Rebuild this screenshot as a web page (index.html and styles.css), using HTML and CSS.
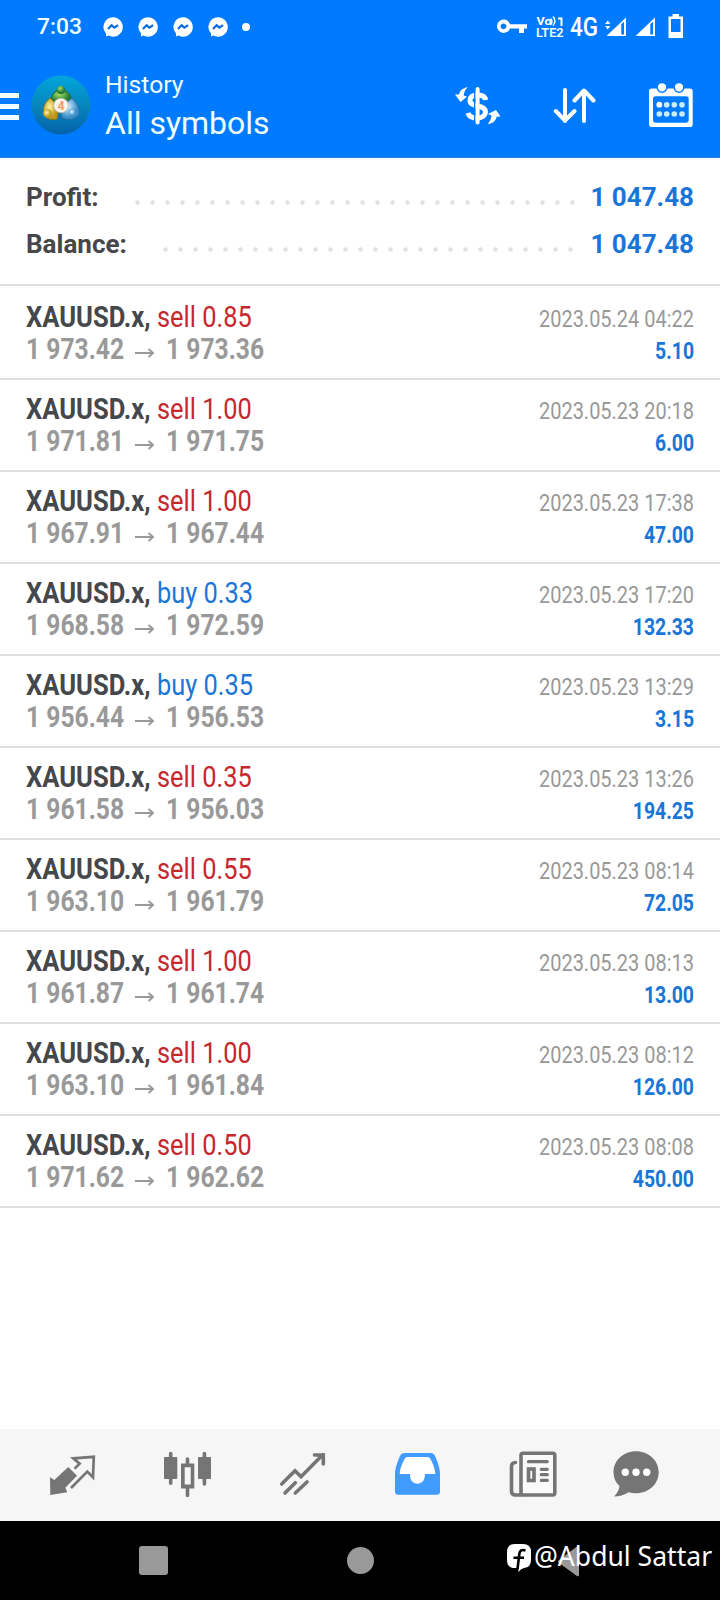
FILE: index.html
```html
<!DOCTYPE html>
<html lang="en">
<head>
<meta charset="utf-8">
<title>History</title>
<link rel="stylesheet" href="styles.css">
</head>
<body>
<svg class="defs" width="0" height="0">
  <symbol id="msgr" viewBox="0 0 20 20"><path fill="#fff" d="M10 .3a9.7 9.7 0 1 1-4.6 18.2L3 19.6V16.500A9.700 9.700 0 0 1 10 .3z"/><path d="M5 12l3.600-3.700 2.800 2.400 3.700-2.600" fill="none" stroke="#0a6ae0" stroke-width="2.200"/></symbol>
</svg>
<header class="top">
  <div class="status">
    <span class="time">7:03</span>
    <div class="notes">
      <svg width="20" height="20"><use href="#msgr"/></svg>
      <svg width="20" height="20"><use href="#msgr"/></svg>
      <svg width="20" height="20"><use href="#msgr"/></svg>
      <svg width="20" height="20"><use href="#msgr"/></svg>
      <i class="dot"></i>
    </div>
    <svg class="sys" width="190" height="30" viewBox="495 12 190 30" fill="#fff">
      <path fill-rule="evenodd" d="M503.500 19.500a6.700 6.700 0 0 1 6.500 4.700h17v4.400h-3v4.400h-5v-4.400h-9a6.700 6.700 0 1 1-6.500-9.100zm0 4a2.900 2.900 0 1 0 .01 0z"/>
      <text x="536.500" y="25" font-size="10.500" font-weight="700" textLength="15" lengthAdjust="spacingAndGlyphs">Vo</text>
      <path d="M550.500 18.500q3 3 0 6.500M553 16.500q4 4.500 0 9" fill="none" stroke="#fff" stroke-width="1.400"/>
      <path d="M558 18.500h3.500v7.500" fill="none" stroke="#fff" stroke-width="2"/>
      <text x="536" y="37.300" font-size="12" font-weight="600" textLength="27.500" lengthAdjust="spacingAndGlyphs">LTE2</text>
      <text x="570" y="36" font-size="25.500" font-weight="500" textLength="28" lengthAdjust="spacingAndGlyphs">4G</text>
      <path d="M605 24l2.700-3.500 2.700 3.500zM605 26l2.700 3.500 2.700-3.500z"/>
      <path fill-rule="evenodd" d="M626 17.500v18.500h-19.500zm-4.700 6.500v10.500h2.700v-12.700z"/>
      <path fill-rule="evenodd" d="M655 17.500v18.500h-19.500zm-4.700 6.500v10.500h2.700v-12.700z"/>
      <path fill-rule="evenodd" d="M672.500 14h6.500v2.500h4v21.500h-14.500v-21.500h4zm-1.500 5v13h9.500v-13z"/>
    </svg>
  </div>
  <div class="bar">
    <div class="menu"><i></i><i></i><i></i></div>
    <svg class="logo" width="60" height="60" viewBox="0 0 60 60">
      <defs>
        <linearGradient id="bg" x1="0" y1="0" x2="0" y2="1"><stop offset="0" stop-color="#02a6dc"/><stop offset=".5" stop-color="#0786bd"/><stop offset="1" stop-color="#0562ab"/></linearGradient>
        <radialGradient id="gr" cx=".4" cy=".3"><stop offset="0" stop-color="#a5df68"/><stop offset="1" stop-color="#257d35"/></radialGradient>
        <radialGradient id="ye" cx=".4" cy=".4"><stop offset="0" stop-color="#fff3a0"/><stop offset="1" stop-color="#b9971b"/></radialGradient>
        <radialGradient id="bl" cx=".4" cy=".4"><stop offset="0" stop-color="#dcf4ff"/><stop offset="1" stop-color="#398fca"/></radialGradient>
      </defs>
      <circle cx="30" cy="30" r="29.500" fill="url(#bg)"/>
      <path d="M20 28q0-13 10-13t11 14z" fill="url(#gr)" stroke="#25652f"/>
      <path d="M19 23q-10 9-5 18 4 5 12 3l2-12z" fill="url(#ye)" stroke="#8d791b"/>
      <path d="M41 23q9 8 7 17-7 7-17 3l-2-10z" fill="url(#bl)" stroke="#2b6d9f"/>
      <circle cx="30" cy="15" r="4.300" fill="url(#gr)"/>
      <circle cx="16.500" cy="38.500" r="4.300" fill="url(#ye)"/>
      <circle cx="41.500" cy="37.500" r="4" fill="url(#bl)"/>
      <circle cx="30" cy="30.500" r="7.300" fill="#f6f5ef" stroke="#b9ac9c" stroke-width=".7"/>
      <text x="26.500" y="35" font-size="12.500" font-weight="700" fill="#ef9a63">4</text>
    </svg>
    <div class="heading"><div class="sub">History</div><div class="main">All symbols</div></div>
    <svg class="act" width="50" height="44" viewBox="0 0 50 44">
      <path d="M32.500 16C32 12.500 29 11 24.800 11 19 11 17 13.500 17 16.500c0 3.500 3 4.500 7.800 5.500 5 1 7.700 3 7.700 6s-3 6-7.700 6C19 34 16 32.500 15 29" fill="none" stroke="#fff" stroke-width="5"/>
      <path d="M21.800 3v37" stroke="#007bff" stroke-width="1.500"/>
      <path d="M24.600 5v33.500" stroke="#fff" stroke-width="4" stroke-linecap="round"/>
      <path fill="#fff" d="M14.700 3.300C10 4 7 6.500 6 10.500H2L7.500 18l6.500-5.300-3.300-1.200c.3-3.500 1.800-6 4-8.200zM34.700 40c2.300-3 3.500-5 3.800-8.500L35 30l8-4 4.500 6.500-4 .2c-.5 3.800-3.500 6.800-8.800 7.300z"/>
    </svg>
    <svg class="act a2" width="44" height="44" viewBox="0 0 44 44" fill="none" stroke="#fff" stroke-width="4" stroke-linecap="round" stroke-linejoin="round"><path d="M12 6v31M2.800 27l9.200 9.500 9.500-9.500M31 37V7M21.500 16.500L31 6.500l9.500 10"/></svg>
    <svg class="act a3" width="46" height="46" viewBox="0 0 46 46">
      <path fill="#fff" fill-rule="evenodd" d="M4 6.500h38q2.700 0 2.700 2.700v33q0 2.800-2.700 2.800H4q-3 0-3-2.800v-33q0-2.700 3-2.700zm3.500 7.800q-2.500 0-2.500 2.500v21.500q0 2.400 2.500 2.400h30.700q2.500 0 2.500-2.400V16.800q0-2.500-2.500-2.500z"/>
      <g fill="#fff" stroke="#007bff" stroke-width="1.500"><circle cx="14" cy="5.300" r="4.900"/><circle cx="31" cy="5.300" r="4.900"/></g>
      <g fill="#c9efff"><circle cx="11.300" cy="22.700" r="2.900" fill="#fff"/><circle cx="18.700" cy="22.700" r="2.800"/><circle cx="26.300" cy="22.700" r="2.800"/><circle cx="34" cy="22.700" r="2.800"/><circle cx="11.300" cy="32" r="2.800"/><circle cx="18.700" cy="32" r="2.800"/><circle cx="26.300" cy="32" r="2.800"/><circle cx="34" cy="32" r="2.800"/></g>
    </svg>
  </div>
</header>
<section class="totals">
  <div class="total"><b>Profit:</b><i class="dots d1"></i><b class="sum">1 047.48</b></div>
  <div class="total"><b>Balance:</b><i class="dots d2"></i><b class="sum">1 047.48</b></div>
</section>
<main class="deals" id="deals"></main>
<nav class="tabs">
  <svg width="48" height="48"><path fill="#757575" d="M2 27.300L6.300 30l14-13L29 25.700l-11.700 12 2 4.600L2.300 45z"/><path fill="none" stroke="#757575" stroke-width="2.700" d="M26.600 18.600l5-5-6.300-5.300 20.500-1.500-.8 20.500-5.700-5.700L23 38"/></svg>
  <svg width="48" height="48" fill="#757575"><rect x="1" y="7" width="13.300" height="22" rx="1"/><rect x="35" y="7" width="13" height="22" rx="1"/><path fill-rule="evenodd" d="M18 13.500h13.300v25H18zm3.700 3.700v17.400h6V17.200z"/><path stroke="#757575" stroke-width="3.600" stroke-linecap="round" d="M7.700 3.500v29.700M41.400 3.500V34M24.500 9v5M24.500 38v7.500"/></svg>
  <svg width="48" height="48" fill="none" stroke="#757575" stroke-width="3.600" stroke-linecap="round"><path d="M2.700 34L16 20.700l6 6L43.700 4.700M35.500 5h8.800v9M6 43l10.300-10.300M16.300 43L28 32" stroke-linejoin="miter"/></svg>
  <svg width="48" height="48"><path fill="#429bff" d="M10.500 3h26q3.500 0 5 4 4.500 10.500 4.500 17v17.500q0 3.200-3.200 3.200H4.200Q1 44.700 1 41.500V24Q1 17.500 5.500 7q1.500-4 5-4z"/><path fill="#fff" d="M13.500 7h20q2 0 3 2 4.800 9.500 4.800 15H31q0 9.700-7.600 9.700T16 24H5.700q0-5.500 4.800-15 1-2 3-2z"/></svg>
  <svg width="49" height="48" fill="none" stroke="#757575" stroke-width="3.600" stroke-linecap="round" stroke-linejoin="round"><path d="M6.500 12.500q-4 0-4 4V41q0 4 4 4h6"/><rect x="12" y="3.200" width="33.800" height="41.800" rx="2" fill="#fafafa"/><path d="M19.500 11.700h18.700M32.300 19.300h6M32.300 24.700h6M32.300 30.300h6" stroke-width="3.200"/><rect x="19.500" y="19" width="5.500" height="11.500" stroke-linejoin="miter"/></svg>
  <svg class="chat" width="48" height="48"><path fill="#757575" d="M24 1.300c12.500 0 22.700 9 22.700 21S36.500 43.300 24 43.300q-4 0-7.500-1Q10 46.500 2 46.500q5-5 5.500-10.500Q1.500 31 1.500 22.300c0-12 10-21 22.500-21z"/><g fill="#fff"><circle cx="13.300" cy="22.300" r="3.700"/><circle cx="24" cy="22.300" r="3.700"/><circle cx="34.700" cy="22.300" r="3.700"/></g></svg>
</nav>
<footer class="sysnav">
  <i class="recent"></i><i class="home"></i>
  <svg class="back" width="22" height="32"><path fill="#999" d="M21 1v29q0 2-2 1L1 18q-2-1.500 0-3L19 1.500q2-1.500 2-.5z"/></svg>
  <div class="mark">
    <svg width="24" height="28"><path fill="#fff" d="M8 0h8q8 0 8 8v8q0 7.500-7 8-3 .5-5.500 4v-4H8q-8 0-8-8V8q0-8 8-8z"/><path d="M18.500 6.500q-5.500-2-6.200 3.500l-1.800 15M6.500 13.800h10.500" fill="none" stroke="#000" stroke-width="2.600"/></svg>
    <span>@Abdul Sattar</span>
  </div>
</footer>
<script src="deals.js"></script>
</body>
</html>
```
FILE: deals.js
```js
const deals = [
  ["sell 0.85", "1 973.42", "1 973.36", "2023.05.24 04:22", "5.10"],
  ["sell 1.00", "1 971.81", "1 971.75", "2023.05.23 20:18", "6.00"],
  ["sell 1.00", "1 967.91", "1 967.44", "2023.05.23 17:38", "47.00"],
  ["buy 0.33", "1 968.58", "1 972.59", "2023.05.23 17:20", "132.33"],
  ["buy 0.35", "1 956.44", "1 956.53", "2023.05.23 13:29", "3.15"],
  ["sell 0.35", "1 961.58", "1 956.03", "2023.05.23 13:26", "194.25"],
  ["sell 0.55", "1 963.10", "1 961.79", "2023.05.23 08:14", "72.05"],
  ["sell 1.00", "1 961.87", "1 961.74", "2023.05.23 08:13", "13.00"],
  ["sell 1.00", "1 963.10", "1 961.84", "2023.05.23 08:12", "126.00"],
  ["sell 0.50", "1 971.62", "1 962.62", "2023.05.23 08:08", "450.00"]
];
document.getElementById("deals").innerHTML = deals.map(([op, from, to, date, profit]) => `
<article class="deal">
  <div class="left">
    <div class="line"><span class="sym"><b>XAUUSD.x,</b></span><span class="op ${op.split(" ")[0]}">${op}</span></div>
    <div class="line price"><span class="from">${from}</span><svg class="arrow" width="19" height="12"><path d="M0 6h17.500M13.500 2L18 6l-4.500 4" fill="none" stroke="#999" stroke-width="1.900"/></svg><span class="to">${to}</span></div>
  </div>
  <div class="right"><div class="date">${date}</div><div class="profit">${profit}</div></div>
</article>`).join("");
```
FILE: styles.css
```css
* { box-sizing: border-box; }
body { margin: 0; width: 720px; height: 1600px; display: flex; flex-direction: column; background: #fff; font-family: Roboto, "Liberation Sans", sans-serif; overflow: hidden; white-space: nowrap; }
svg { display: block; flex: none; }
i { display: block; flex: none; }
.defs { position: absolute; }

.top { height: 158px; flex: none; background: #007bff; color: #f0fdff; border-bottom: 1px solid #2c7fd2; }
.status { height: 54px; display: flex; align-items: center; padding-left: 37px; }
.time { width: 65.500px; font-size: 22.800px; font-weight: 500; line-height: 54px; }
.notes { display: flex; align-items: center; gap: 15px; }
.dot { width: 8px; height: 8px; border-radius: 50%; background: #fff; margin-left: -1px; }
.sys { margin-left: 245.500px; }
.bar { display: flex; height: 103px; align-items: flex-start; }
.menu { width: 19px; margin-top: 39px; display: flex; flex-direction: column; gap: 6px; }
.menu i { height: 5px; background: #f0fdff; }
.logo { margin: 21px 0 0 11.500px; }
.heading { margin: 16px 0 0 14.500px; width: 347.500px; }
.sub { font-size: 24.300px; line-height: 29px; transform: scaleX(1.015); transform-origin: 0 50%; }
.main { font-size: 32px; line-height: 48px; }
.act { margin-top: 30px; }
.a2 { margin-left: 50.500px; }
.a3 { margin: 28px 0 0 50.500px; }

.totals { height: 128px; flex: none; padding: 16px 26px 0; border-bottom: 2px solid #e0e0e0; }
.total { display: flex; justify-content: space-between; height: 47px; line-height: 47px; font-size: 26px; color: #46474a; }
.total b { font-weight: 700; width: 104px; }
.total .sum { color: #1976d8; text-align: right; }
.dots { height: 15px; margin-top: 21px; background: radial-gradient(circle at 7.500px 7.500px, #e1e1e1 1.800px, transparent 2.600px) 0 0 / 15px 15px; }
.d1 { width: 450px; margin-left: 0; margin-right: 10px; }
.d2 { width: 420px; margin-left: 28px; margin-right: 12px; }

.deals { flex: 1; padding-top: 2px; }
.deal { height: 92px; padding: 12.500px 26px 0; border-bottom: 2px solid #e0e0e0; display: flex; justify-content: space-between; }
.line { height: 32.500px; line-height: 32px; font-size: 29.500px; display: flex; }
.sym, .op, .from, .to { transform-origin: 0 50%; transform: scaleX(.86); }
.sym { width: 131px; color: #46474a; transform: scaleX(.867); }
.sym b { font-weight: 700; }
.sell { color: #c5272d; }
.buy { color: #1976d8; }
.price { font-size: 29px; font-weight: 700; color: #999; }
.from, .to { transform: scaleX(.85); }
.from { width: 109px; }
.arrow { margin: 14px 12px 0 0; }
.right { width: 250px; text-align: right; padding-top: 2.500px; }
.date, .profit { font-size: 23.500px; line-height: 32px; transform: scaleX(.85); transform-origin: 100% 50%; }
.date { color: #999; }
.profit { color: #1976d8; font-weight: 700; transform: scaleX(.825); }

.tabs { height: 92px; flex: none; background: #f6f6f6; display: flex; gap: 67.350px; padding: 21px 0 0 48px; }
.chat { margin-left: -13.500px; }
.sysnav { height: 79px; flex: none; background: #000; position: relative; display: flex; padding: 25px 0 0 139px; }
.recent { width: 29px; height: 29px; border-radius: 3px; background: #999; }
.home { width: 27px; height: 27px; border-radius: 50%; background: #999; margin: 1px 0 0 179px; }
.back { margin: -1px 0 0 184px; }
.mark { position: absolute; left: 507px; top: 23px; display: flex; color: #fff; gap: 3px; }
.mark span { font-family: "Noto Sans", sans-serif; font-size: 27px; line-height: 24px; transform: scaleX(.983); transform-origin: 0 50%; }
```
